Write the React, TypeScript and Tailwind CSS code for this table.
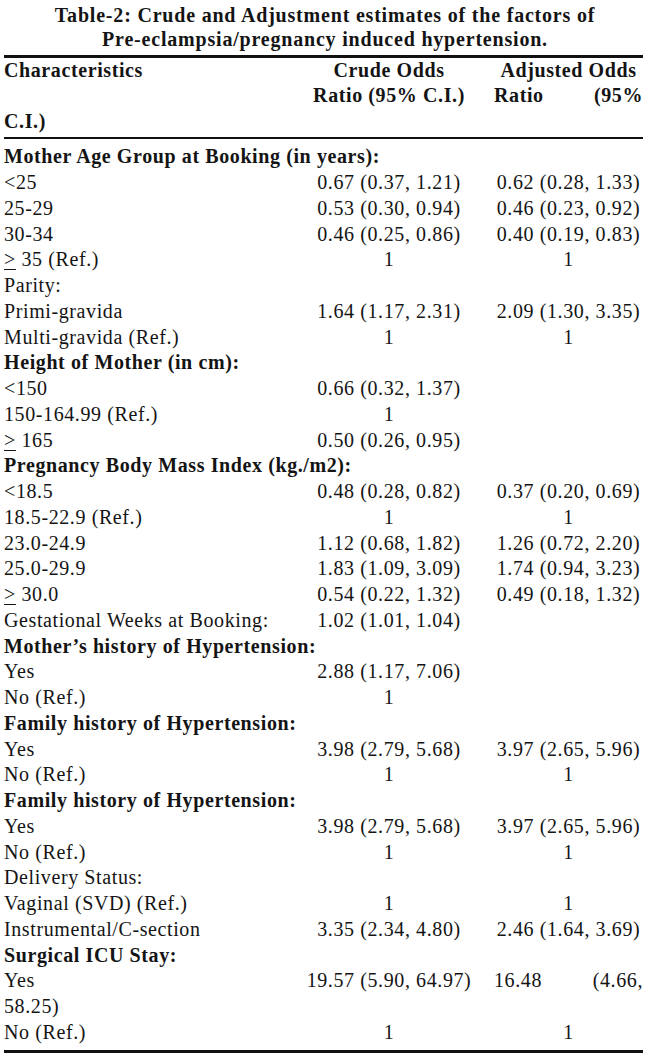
import React from 'react';

interface Row {
  label: React.ReactNode;
  crude?: string;
  adjusted?: string;
  bold?: boolean;
}

const Ge = ({ children }: { children: React.ReactNode }) => (
  <>
    <span className="underline underline-offset-[3px] decoration-1">&gt;</span> {children}
  </>
);

const rows: Row[] = [
  { label: 'Mother Age Group at Booking (in years):', bold: true },
  { label: '<25', crude: '0.67 (0.37, 1.21)', adjusted: '0.62 (0.28, 1.33)' },
  { label: '25-29', crude: '0.53 (0.30, 0.94)', adjusted: '0.46 (0.23, 0.92)' },
  { label: '30-34', crude: '0.46 (0.25, 0.86)', adjusted: '0.40 (0.19, 0.83)' },
  { label: <Ge>35 (Ref.)</Ge>, crude: '1', adjusted: '1' },
  { label: 'Parity:' },
  { label: 'Primi-gravida', crude: '1.64 (1.17, 2.31)', adjusted: '2.09 (1.30, 3.35)' },
  { label: 'Multi-gravida (Ref.)', crude: '1', adjusted: '1' },
  { label: 'Height of Mother (in cm):', bold: true },
  { label: '<150', crude: '0.66 (0.32, 1.37)' },
  { label: '150-164.99 (Ref.)', crude: '1' },
  { label: <Ge>165</Ge>, crude: '0.50 (0.26, 0.95)' },
  { label: 'Pregnancy Body Mass Index (kg./m2):', bold: true },
  { label: '<18.5', crude: '0.48 (0.28, 0.82)', adjusted: '0.37 (0.20, 0.69)' },
  { label: '18.5-22.9 (Ref.)', crude: '1', adjusted: '1' },
  { label: '23.0-24.9', crude: '1.12 (0.68, 1.82)', adjusted: '1.26 (0.72, 2.20)' },
  { label: '25.0-29.9', crude: '1.83 (1.09, 3.09)', adjusted: '1.74 (0.94, 3.23)' },
  { label: <Ge>30.0</Ge>, crude: '0.54 (0.22, 1.32)', adjusted: '0.49 (0.18, 1.32)' },
  { label: 'Gestational Weeks at Booking:', crude: '1.02 (1.01, 1.04)' },
  { label: 'Mother\u2019s history of Hypertension:', bold: true },
  { label: 'Yes', crude: '2.88 (1.17, 7.06)' },
  { label: 'No (Ref.)', crude: '1' },
  { label: 'Family history of Hypertension:', bold: true },
  { label: 'Yes', crude: '3.98 (2.79, 5.68)', adjusted: '3.97 (2.65, 5.96)' },
  { label: 'No (Ref.)', crude: '1', adjusted: '1' },
  { label: 'Family history of Hypertension:', bold: true },
  { label: 'Yes', crude: '3.98 (2.79, 5.68)', adjusted: '3.97 (2.65, 5.96)' },
  { label: 'No (Ref.)', crude: '1', adjusted: '1' },
  { label: 'Delivery Status:' },
  { label: 'Vaginal (SVD) (Ref.)', crude: '1', adjusted: '1' },
  { label: 'Instrumental/C-section', crude: '3.35 (2.34, 4.80)', adjusted: '2.46 (1.64, 3.69)' },
  { label: 'Surgical ICU Stay:', bold: true },
];

const rowCls = 'grid grid-cols-[296px_178px_1fr] h-[25.75px] leading-[25.75px] whitespace-nowrap';

const TableRow = ({ row }: { row: Row }) => (
  <div className={rowCls}>
    <div className={row.bold ? 'font-bold' : ''}>{row.label}</div>
    <div className="text-center">{row.crude}</div>
    <div className="pl-[16px] text-center">{row.adjusted}</div>
  </div>
);

export default function App() {
  return (
    <div className="w-[650px] bg-white text-[#141414] text-[20px] tracking-[0.6px] font-['Liberation_Serif','Times_New_Roman',serif]">
      <div className="pt-[3px] text-center font-bold leading-[24px] tracking-[0.8px]">
        <div>Table-2: Crude and Adjustment estimates of the factors of</div>
        <div>Pre-eclampsia/pregnancy induced hypertension.</div>
      </div>

      <div className="ml-[4px] w-[639px]">
        <div className="mt-[4px] h-[2.5px] bg-[#111]" />

        {/* header */}
        <div className="font-bold">
          <div className={rowCls}>
            <div>Characteristics</div>
            <div className="text-center">Crude Odds</div>
            <div className="pl-[16px] text-center">Adjusted Odds</div>
          </div>
          <div className={rowCls}>
            <div />
            <div className="text-center">Ratio (95% C.I.)</div>
            <div className="pl-[16px] flex justify-between">
              <span>Ratio</span>
              <span>(95%</span>
            </div>
          </div>
          <div className={rowCls}>
            <div>C.I.)</div>
          </div>
        </div>

        <div className="mt-[2px] h-[2px] bg-[#111]" />

        <div className="mt-[5.5px]">
          {rows.map((r, i) => (
            <TableRow key={i} row={r} />
          ))}
          <div className={rowCls}>
            <div>Yes</div>
            <div className="text-center">19.57 (5.90, 64.97)</div>
            <div className="pl-[16px] flex justify-between">
              <span>16.48</span>
              <span>(4.66,</span>
            </div>
          </div>
          <div className={rowCls}>
            <div>58.25)</div>
          </div>
          <TableRow row={{ label: 'No (Ref.)', crude: '1', adjusted: '1' }} />
        </div>

        <div className="mt-[4.5px] h-[2.5px] bg-[#111]" />
      </div>
    </div>
  );
}
